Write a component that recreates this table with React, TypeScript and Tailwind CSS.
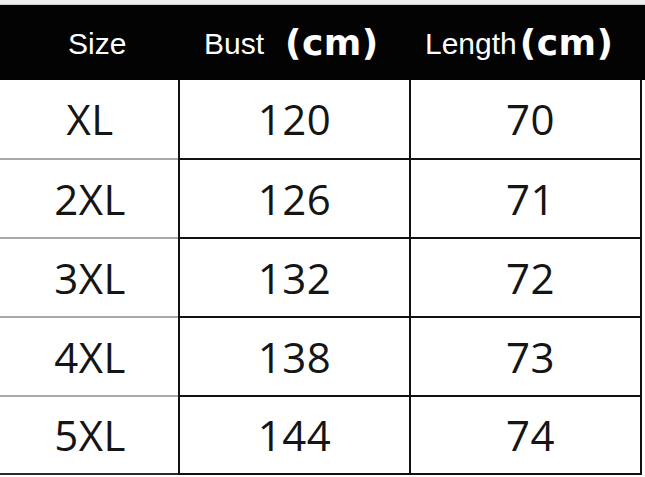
import React from "react";

const rows = [
  { size: "XL", bust: "120", len: "70", h: "h-[80px]" },
  { size: "2XL", bust: "126", len: "71", h: "h-[79px]" },
  { size: "3XL", bust: "132", len: "72", h: "h-[79px]" },
  { size: "4XL", bust: "138", len: "73", h: "h-[79px]" },
  { size: "5XL", bust: "144", len: "74", h: "h-[78px]" },
];

export default function App() {
  return (
    <div className="w-[645px] h-[477px] overflow-hidden bg-white">
      <div className="h-[5px] bg-[#eeeeee] border-b border-[#cfcfcf]" />
      <div className="h-[75px] bg-[#030303] flex items-center text-white font-['Liberation_Sans',Arial,sans-serif] text-[30px] leading-none">
        <div className="w-[178px] pl-[68px] pt-[3px]">Size</div>
        <div className="w-[233px] pl-[26px] flex items-center">
          <span className="pt-[3px]">Bust</span>
          <span className="ml-[21px] font-['DejaVu_Sans',sans-serif] font-bold text-[36px] tracking-[0.5px]">(cm)</span>
        </div>
        <div className="w-[231px] pl-[14px] flex items-center">
          <span className="pt-[3px]">Length</span>
          <span className="ml-[3px] font-['DejaVu_Sans',sans-serif] font-bold text-[36px] tracking-[0.5px]">(cm)</span>
        </div>
      </div>
      {rows.map((r, i) => (
        <div key={r.size} className={`flex ${r.h} font-['Open_Sans',sans-serif] text-[42px] tracking-[0.5px] text-[#151515] leading-none`}>
          <div
            className={`w-[178px] flex items-center justify-center border-b-2 ${
              i === rows.length - 1 ? "border-[#2a2a2a]" : "border-[#a8a8a8]"
            }`}
          >
            <span className="pl-[2px]">{r.size}</span>
          </div>
          <div className="w-[231px] flex items-center justify-center border-l-2 border-b-2 border-[#111]">
            {r.bust}
          </div>
          <div className="w-[233px] flex items-center justify-center border-l-2 border-r-2 border-b-2 border-[#111]">
            <span className="pl-[10px]">{r.len}</span>
          </div>
          <div className="w-[3px]" />
        </div>
      ))}
    </div>
  );
}
